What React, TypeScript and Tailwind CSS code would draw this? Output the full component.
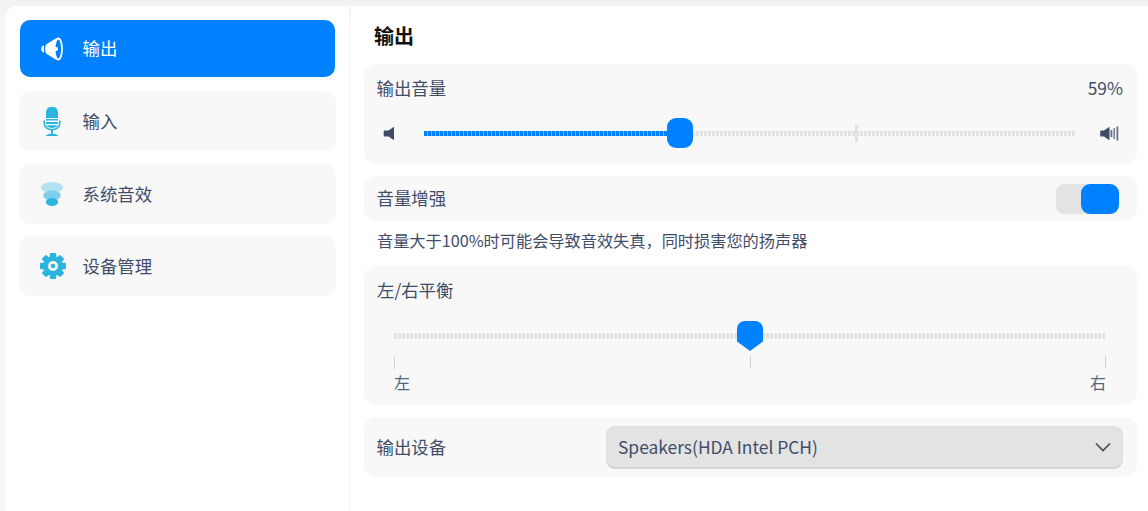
const font = "font-['Noto_Sans_CJK_SC','Noto_Sans',sans-serif]";

function SpeakerIcon() {
  return (
    <svg width="24" height="24" viewBox="0 0 24 24" fill="none">
      <path d="M4 8.200v7.600c-1.500-.3-2.800-1.800-2.800-3.800S2.500 8.500 4 8.200z" fill="#fff" />
      <path d="M6 7.500 16.500 1c1.200 2 1.700 6 1.700 11s-.5 9-1.700 11L6 16.500c-.6-1.200-.9-2.800-.9-4.500s.3-3.300.9-4.500z" fill="#fff" />
      <ellipse cx="18.300" cy="12" rx="3.700" ry="10.500" fill="#0081ff" stroke="#fff" strokeWidth="1.800" />
      <circle cx="16" cy="12" r="2" fill="#fff" />
    </svg>
  );
}

function MicIcon() {
  return (
    <svg width="18" height="30" viewBox="0 0 18 30" fill="none">
      <path d="M3 5.500a6 6 0 0 1 12 0V11H3z" fill="#2cb5e0" />
      <path d="M3 12h12v1.500H3zM3 15h12v.8c0 .4 0 .7-.1 1.200H3.100c-.1-.5-.1-.8-.1-1.200z" fill="#2cb5e0" />
      <path d="M3.500 18.200h11c-.8 1.700-3.100 2.800-5.500 2.800s-4.700-1.100-5.500-2.800z" fill="#2cb5e0" />
      <path d="M1.200 13.500v2.500c0 4 3.500 6.800 7.800 6.800s7.800-2.800 7.800-6.800v-2.500" stroke="#2cb5e0" strokeWidth="1.600" />
      <path d="M9 22.800v4" stroke="#2cb5e0" strokeWidth="2" />
      <path d="M2.500 29c1-1.800 3.500-2.600 6.500-2.600s5.500.8 6.500 2.600z" fill="#2cb5e0" />
    </svg>
  );
}

function EffectIcon() {
  return (
    <svg width="24" height="26" viewBox="0 0 24 26">
      <ellipse cx="12" cy="5.500" rx="11.200" ry="5.400" fill="#b5e2f2" />
      <ellipse cx="12" cy="13.500" rx="8.800" ry="5" fill="#7ecdec" />
      <ellipse cx="12" cy="20" rx="6.200" ry="4" fill="#2cb5e0" />
    </svg>
  );
}

function GearIcon() {
  const teeth = [0, 45, 90, 135, 180, 225, 270, 315];
  return (
    <svg width="26" height="26" viewBox="0 0 26 26">
      {teeth.map((deg) => (
        <rect key={deg} x="9.800" y="0" width="6.400" height="6" rx="1.200" fill="#2cb3e0" transform={`rotate(${deg} 13 13)`} />
      ))}
      <circle cx="13" cy="13" r="10" fill="#2cb3e0" />
      <circle cx="13" cy="13" r="5" fill="#f8f8f8" />
      <circle cx="13" cy="13" r="2.200" fill="#2cb3e0" />
    </svg>
  );
}

function VolumeLow() {
  return (
    <svg width="12" height="15" viewBox="0 0 12 15" className="shrink-0">
      <path d="M1 4.500h4.500L11 .8v13.400L5.500 10.500H1c-.5-1-.5-5 0-6z" fill="#414d68" />
    </svg>
  );
}

function VolumeHigh() {
  return (
    <svg width="19" height="15" viewBox="0 0 19 15" className="shrink-0">
      <path d="M.5 4.500h3.500L9.500 .8v13.400L4 10.500H.5c-.5-1-.5-5 0-6z" fill="#414d68" />
      <path d="M10.500 4h1.800v7h-1.800z" fill="#414d68" opacity="0.8" />
      <path d="M13.500 2h1.400v11h-1.400z" fill="#414d68" opacity="0.8" />
      <path d="M16.500 .5h1.800v14h-1.800z" fill="#414d68" opacity="0.8" />
    </svg>
  );
}

const navItems = [
  { label: "输入", icon: <MicIcon />, iconClass: "pt-[2px]", labelClass: "pt-[1px]" },
  { label: "系统音效", icon: <EffectIcon />, iconClass: "pt-[2px]", labelClass: "pt-[1px]" },
  { label: "设备管理", icon: <GearIcon />, iconClass: "pl-[3px]", labelClass: "" },
];

export default function App() {
  return (
    <div className={`${font} w-[1148px] h-[511px] overflow-hidden bg-[linear-gradient(180deg,#f2f2f2_0,#f8f8f8_24px)] pt-[6px] pl-[6px] flex text-[17.4px] text-[#414d68]`}>
      <aside className="w-[343px] h-full bg-white rounded-tl-[10px] pt-[14px] px-[13px] flex flex-col gap-[12.5px] shrink-0">
        <div className="mx-px mb-[1.5px] h-[57px] rounded-[10px] bg-[#0081ff] flex items-center text-white">
          <span className="w-[62.5px] pl-[20px] shrink-0"><SpeakerIcon /></span>
          <span>输出</span>
        </div>
        {navItems.map((item) => (
          <div key={item.label} className="h-[60px] rounded-[12px] bg-[#f8f8f8] flex items-center">
            <span className={`w-[64px] -mr-[0.5px] flex justify-center pl-[2px] shrink-0 ${item.iconClass}`}>{item.icon}</span>
            <span className={item.labelClass}>{item.label}</span>
          </div>
        ))}
      </aside>

      <div className="w-[2px] h-full shrink-0" />

      <main className="flex-1 h-full bg-white pl-[13px] pr-[11px]">
        <h1 className="h-[58px] pl-[10px] pt-[10px] text-[20px] leading-[40px] font-bold text-[#111]">输出</h1>
        <div className="h-[100px] rounded-[12px] bg-[#f8f8f8] pl-[13px] pr-[14px] pt-[10px]">
          <div className="flex justify-between h-[28px] leading-[28px] -ml-[0.5px]">
            <span>输出音量</span>
            <span>59%</span>
          </div>
          <div className="flex items-center mt-[24px] pl-[6px]">
            <VolumeLow />
            <div className="relative w-[652px] h-[5px] ml-[29px]">
              <div className="h-full bg-[repeating-linear-gradient(90deg,#e2e2e2_0,#e2e2e2_3px,transparent_3px,transparent_4px)]" />
              <div className="absolute left-0 top-0 h-full w-[244px] bg-[repeating-linear-gradient(90deg,#0081ff_0,#0081ff_3px,#66b3ff_3px,#66b3ff_4px)]" />
              <div className="absolute left-[431px] -top-[6px] w-[3px] h-[17px] bg-[#e2e2e2]" />
              <div className="absolute left-[243px] -top-[13px] w-[26px] h-[30px] rounded-[9px] bg-[#0081ff]" />
            </div>
            <span className="ml-[24px]"><VolumeHigh /></span>
          </div>
        </div>

        <div className="h-[45px] mt-[12px] rounded-[12px] bg-[#f8f8f8] pl-[12.5px] pr-[18px] flex items-center justify-between">
          <span>音量增强</span>
          <div className="w-[63px] h-[30px] rounded-[8px] bg-[#e3e3e3] flex justify-end">
            <div className="w-[38px] h-full rounded-[9px] bg-[#0081ff]" />
          </div>
        </div>

        <p className="h-[45px] pl-[13px] pt-[7px] text-[16.2px] leading-[24px]">音量大于100%时可能会导致音效失真，同时损害您的扬声器</p>

        <div className="h-[139px] rounded-[12px] bg-[#f8f8f8] px-[13px] pt-[10px]">
          <div className="h-[28px] leading-[28px]">左/右平衡</div>
          <div className="relative mt-[29px] ml-[17px] w-[712px] h-[6px] bg-[repeating-linear-gradient(90deg,#e2e2e2_0,#e2e2e2_3px,transparent_3px,transparent_4px)]">
            <svg width="26" height="30" viewBox="0 0 26 30" className="absolute left-[343px] -top-[12px]">
              <path d="M8 0h10a8 8 0 0 1 8 8v12.500L13 30 0 20.500V8a8 8 0 0 1 8-8z" fill="#0081ff" />
            </svg>
          </div>
          <div className="ml-[17px] w-[712px] mt-[17px] flex justify-between">
            <div className="w-px h-[13px] bg-[#d4d4d4]" />
            <div className="w-px h-[13px] bg-[#d4d4d4]" />
            <div className="w-px h-[13px] bg-[#d4d4d4]" />
          </div>
          <div className="ml-[17px] w-[712px] mt-[1px] flex justify-between text-[16px] leading-[24px] text-[#52667d]">
            <span>左</span>
            <span>右</span>
          </div>
        </div>

        <div className="h-[60px] mt-[12px] rounded-[12px] bg-[#f8f8f8] pl-[12.5px] pr-[14px] flex items-center justify-between">
          <span className="pt-[1px]">输出设备</span>
          <div className="w-[517px] h-[43px] rounded-[9px] bg-[#e3e3e3] border border-[#dcdcdc] border-b-[2px] border-b-[#d4d4d4] px-[11px] flex items-center justify-between">
            <span className="pt-[1px]">Speakers(HDA Intel PCH)</span>
            <svg width="16" height="10" viewBox="0 0 16 10" fill="none" stroke="#414d68" strokeWidth="1.700">
              <path d="M1 1.500 8 8.500l7-7" />
            </svg>
          </div>
        </div>
      </main>
    </div>
  );
}
